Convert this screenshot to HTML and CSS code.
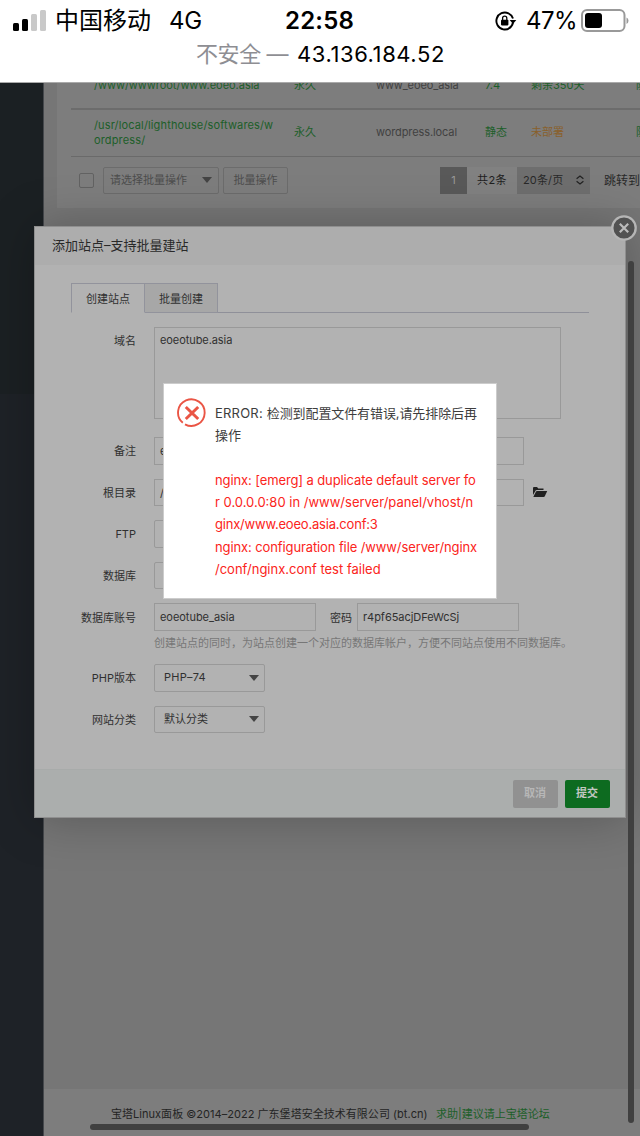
FILE: index.html
```html
<!DOCTYPE html>
<html lang="zh-CN">
<head>
<meta charset="utf-8">
<title>宝塔Linux面板</title>
<link rel="stylesheet" href="styles.css">
</head>
<body>
<header class="phone-bar">
  <div class="status">
    <div class="status-left">
      <svg class="signal" width="34" height="21" viewBox="0 0 34 21"><rect x="0" y="13" width="6" height="8" rx="1.5"/><rect x="9" y="9" width="6" height="12" rx="1.5"/><g fill="#c9c9c9"><rect x="18" y="4" width="6" height="17" rx="1.5"/><rect x="27" y="0" width="6" height="21" rx="1.5"/></g></svg>
      <span class="carrier">中国移动</span><span class="network">4G</span>
    </div>
    <span class="clock">22:58</span>
    <div class="status-right">
      <svg class="lock" width="22" height="20" viewBox="0 0 22 20"><path d="M15 16.800A8.500 8.500 0 1 1 18 7.500" fill="none" stroke="#000" stroke-width="1.900"/><path d="M14 17.300a8.500 8.500 0 0 0 4-6" fill="none" stroke="#000" stroke-width="1.900"/><path d="M14.700 9h6.600L18 13z"/><rect x="6" y="8.800" width="7.400" height="5.600" rx=".8"/><path d="M7.600 9V7.200a2.100 2.100 0 0 1 4.200 0V9" fill="none" stroke="#000" stroke-width="1.300"/></svg>
      <span class="percent">47%</span>
      <svg width="48" height="24" viewBox="0 0 48 24"><rect x="1" y="1" width="42.500" height="21" rx="5" fill="none" stroke="#999" stroke-width="2"/><rect x="4" y="4" width="17" height="15" rx="3"/><path d="M45.500 8.500q2 .8 2 3.200t-2 3.200z" fill="#999"/></svg>
    </div>
  </div>
  <div class="address"><span class="insecure">不安全 —</span><span class="host">43.136.184.52</span></div>
</header>

<div class="viewport">
  <aside class="sidebar"><div class="menu"></div></aside>
  <main class="main">
    <section class="card">
      <div class="row row-cut"><span class="c-path">/www/wwwroot/www.eoeo.asia</span><span class="c-term">永久</span><span class="c-name">www_eoeo_asia</span><span class="c-php">7.4</span><span class="c-ssl">剩余350天</span><span class="c-act">防</span></div>
      <div class="row"><span class="c-path">/usr/local/lighthouse/softwares/w<br>ordpress/</span><span class="c-term">永久</span><span class="c-name">wordpress.local</span><span class="c-php">静态</span><span class="c-ssl warn">未部署</span><span class="c-act">防</span></div>
      <div class="tools">
        <i class="check"></i>
        <div class="batch"><span>请选择批量操作</span><i class="caret"></i></div>
        <div class="batch-btn">批量操作</div>
        <div class="pager"><span class="page">1</span><span class="total">共2条</span><span class="size">20条/页<svg width="8" height="10" viewBox="0 0 8 10" fill="none" stroke="#222" stroke-width="1.200"><path d="M.6 3.800 4 1l3.400 2.800M.6 6.200 4 9l3.400-2.800"/></svg></span><span class="jump">跳转到</span></div>
      </div>
    </section>
    <footer class="foot"><span class="copyright">宝塔Linux面板 ©2014–2022 广东堡塔安全技术有限公司 (bt.cn)</span><a>求助|建议请上宝塔论坛</a></footer>
  </main>

  <section class="modal">
    <h1 class="modal-title">添加站点–支持批量建站</h1>
    <div class="modal-body">
      <nav class="tabs"><span class="tab active">创建站点</span><span class="tab">批量创建</span></nav>
      <form class="form">
        <div class="field tall"><label>域名</label><div class="area">eoeotube.asia</div></div>
        <div class="field"><label>备注</label><div class="input wide">eoeo</div></div>
        <div class="field"><label>根目录</label><div class="input wide">/www</div>
          <svg class="folder" width="16" height="12" viewBox="0 0 16 12"><path d="M1 9V2Q1 1 2 1H5L6.300 2.400H11.500V4H5Q3.700 4 3.200 5.200Z"/><path d="M1.300 11 4 5.500Q4.300 5 5 5H15.200L12.800 10.300Q12.400 11 11.600 11Z"/></svg>
        </div>
        <div class="field"><label>FTP</label><div class="select"></div></div>
        <div class="field"><label>数据库</label><div class="select"></div></div>
        <div class="field"><label>数据库账号</label><div class="input user">eoeotube_asia</div><span class="pw">密码</span><div class="input user">r4pf65acjDFeWcSj</div></div>
        <p class="help">创建站点的同时，为站点创建一个对应的数据库帐户，方便不同站点使用不同数据库。</p>
        <div class="field"><label>PHP版本</label><div class="select"><span class="php">PHP–74</span><i class="caret"></i></div></div>
        <div class="field"><label>网站分类</label><div class="select"><span>默认分类</span><i class="caret"></i></div></div>
      </form>
    </div>
    <div class="modal-foot"><span class="btn cancel">取消</span><span class="btn submit">提交</span></div>
    <svg class="close" width="28" height="28" viewBox="0 0 28 28"><circle cx="14" cy="14" r="11.700" fill="#515151" stroke="#b5b5b5" stroke-width="2.300"/><path d="m9.800 9.800 8.400 8.400m0-8.400-8.400 8.400" stroke="#bbb" stroke-width="2.200"/></svg>
  </section>
  <i class="scroll-y"></i><i class="scroll-x"></i>

  <section class="alert">
    <svg class="alert-icon" width="30" height="30" viewBox="0 0 30 30" fill="none" stroke="#ea5545"><path d="M5.800 24.800A13.300 13.300 0 1 1 8 26.300" stroke-width="1.900"/><path d="m8.800 9 12.400 12M21.200 9 8.800 21" stroke-width="3"/></svg>
    <div class="alert-text">
      <p><span class="error-tag">ERROR: </span><span class="error-msg">检测到配置文件有错误,请先排除后再</span><br>操作</p>
      <p class="log"><span class="snug">nginx: [emerg] a duplicate default server fo</span><br><span>r 0.0.0.0:80 in /www/server/panel/vhost/n</span><br><span class="tight">ginx/www.eoeo.asia.conf:3</span><br><span class="snug">nginx: configuration file /www/server/nginx</span><br><span>/conf/nginx.conf test failed</span></p>
    </div>
  </section>
</div>
</body>
</html>
```
FILE: styles.css
```css
* { box-sizing: border-box; }
body { margin: 0; width: 640px; height: 1136px; overflow: hidden; font: 11px/15px Inter, "Noto Sans CJK SC", sans-serif; color: #303030; }
p, h1 { margin: 0; font-weight: 400; }
span, a, label { white-space: nowrap; }
i { display: block; }

.phone-bar { height: 83px; background: #fff; color: #000; border-bottom: 1px solid #aaa; }
.status { display: grid; grid-template-columns: 285px 208px 147px; height: 41px; align-items: center; font-size: 24px; line-height: 40px; }
.status-left { display: flex; align-items: center; padding-left: 13px; }
.signal { margin-right: 8px; }
.carrier { width: 114px; }
.network { letter-spacing: -.3px; }
.clock { font-weight: 600; letter-spacing: .2px; }
.status-right { display: flex; align-items: center; padding-left: 2px; }
.lock { margin-right: 9px; }
.percent { width: 55px; letter-spacing: -.6px; }
.address { display: flex; padding-left: 196px; font-size: 22px; line-height: 26px; }
.insecure { width: 101px; color: #8e8e93; letter-spacing: -.4px; }
.host { letter-spacing: .57px; }

.viewport { position: relative; display: flex; height: 1053px; overflow: hidden; background: #767676; }
.sidebar { width: 44px; background: #1e2227; border-right: 1px solid #45484c; }
.menu { height: 311px; background: #1b2023; }
.main { width: 596px; display: flex; flex-direction: column; justify-content: space-between; }
.card { margin-left: 13px; padding-left: 14px; height: 125px; background: #7d7d7d; overflow: hidden; }
.row { display: grid; grid-template-columns: 200px 82px 109px 46px 105px 20px; align-items: center; height: 47px; padding: 0 0 1px 23px; border-bottom: 1px solid #6a6a6a; color: #1c5f29; }
.row-cut { height: 27px; align-items: start; border-bottom: 2px solid #6c6c6c; }
.row-cut span { margin-top: -5px; }
.c-path { letter-spacing: .14px; }
.row-cut .c-path { letter-spacing: -.02px; }
.c-name { color: #414141; letter-spacing: -.1px; }
.warn { color: #89602b; }
.tools { display: flex; align-items: center; height: 46px; padding-left: 8px; color: #4d4d4d; }
.check { width: 15px; height: 15px; border: 1px solid #626262; border-radius: 2px; margin-right: 9px; }
.batch { width: 116px; height: 27px; padding: 0 6px; border: 1px solid #6c6c6c; border-radius: 2px; display: flex; align-items: center; justify-content: space-between; margin-right: 4px; }
.caret { border: 5px solid transparent; border-top: 6px solid #444; border-bottom: 0; }
.batch-btn { width: 65px; height: 27px; line-height: 25px; border: 1px solid #6c6c6c; border-radius: 2px; text-align: center; margin-right: 152px; }
.pager { display: flex; flex: none; line-height: 27px; color: #292929; }
.page { width: 27px; background: #595959; color: #999; text-align: center; }
.total { width: 50px; text-align: center; background: #818181; color: #202020; letter-spacing: .4px; }
.size { width: 73px; padding: 0 6px; background: #6e6e6e; display: flex; justify-content: space-between; align-items: center; letter-spacing: .15px; }
.jump { margin-left: 14px; font-size: 12px; }
.foot { height: 47px; padding: 18px 0 0 67px; background: #7d7d7d; color: #242424; }
.copyright { letter-spacing: .03px; }
.foot a { margin-left: 8.5px; color: #1c5f29; }

.modal { position: absolute; left: 34px; top: 143px; width: 592px; height: 592px; display: flex; flex-direction: column; background: #b2b2b2; border: 1px solid #8f8f8f; box-shadow: 1px 1px 46px rgba(0,0,0,.25); }
.modal-title { height: 38px; padding-left: 17px; font-size: 13px; line-height: 36px; background: #adadad; color: #292929; }
.modal-body { flex: 1; padding: 18px 36px 0; }
.tabs { display: flex; height: 30px; border-bottom: 1px solid #8f9099; }
.tab { width: 73px; height: 30px; line-height: 30px; text-align: center; background: #a7a7a7; border: 1px solid #92939c; border-left-width: 0; }
.tab.active { width: 74px; background: #b2b2b2; border-left-width: 1px; border-bottom-color: #b2b2b2; }
.form { display: flex; flex-direction: column; gap: 14px; padding-top: 14px; }
.field { display: flex; height: 27.6px; align-items: center; }
.field label { width: 65px; margin-right: 18px; padding-top: 2px; text-align: right; }
.tall { height: 96px; padding-bottom: 4px; align-items: stretch; }
.tall label { padding-top: 7px; }
.area, .input, .select { border: 1px solid #999; }
.area { width: 407px; padding: 5px; letter-spacing: -.08px; }
.input { height: 27.6px; line-height: 26px; padding-left: 5px; overflow: hidden; letter-spacing: -.04px; }
.wide { width: 370px; }
.user { width: 162px; }
.folder { margin-left: 8px; flex: none; fill: #202020; }
.field:has(.folder) { width: 480px; }
.pw { width: 41px; padding: 2px 0 0 14px; }
.help { height: 16.5px; margin: -10px 0 -1.5px; padding-left: 83px; line-height: 16px; color: #777; white-space: nowrap; }
.select { display: flex; align-items: center; justify-content: space-between; width: 111px; height: 27.6px; padding: 0 5px 0 9px; border-radius: 2px; }
.php { letter-spacing: .25px; }
.modal-foot { display: flex; justify-content: flex-end; align-items: center; gap: 7px; height: 48px; padding-right: 15.5px; background: #abaead; border-top: 1px solid #a8abaa; }
.btn { width: 45px; height: 28px; line-height: 27px; border-radius: 2px; text-align: center; font-weight: 700; color: #b7b7b7; background: #919191; }
.submit { background: #0d6b20; color: #c3c8c3; }
.close { position: absolute; right: -13px; top: -13px; }

.scroll-y { position: absolute; left: 628px; top: 178px; width: 6px; height: 862px; border-radius: 3px; background: #404040; }
.scroll-x { position: absolute; left: 90px; top: 1041px; width: 439px; height: 6px; border-radius: 3px; background: #404040; }

.alert { position: absolute; left: 163px; top: 300px; width: 334px; height: 216px; padding: 15px 13px; display: flex; gap: 9px; background: #fff; border: 1px solid #ccc; font-size: 13px; line-height: 22.2px; color: #3d3d3d; }
.alert-icon { flex: none; margin-top: -1px; margin-right: -1px; }
.alert-text { padding-top: 3px; }
.error-tag { white-space: pre; letter-spacing: .22px; }
.error-msg { letter-spacing: -.1px; }
.log { padding-top: 22.5px; color: #fb2420; }
.snug { letter-spacing: -.11px; }
.tight { letter-spacing: -.2px; }
```
